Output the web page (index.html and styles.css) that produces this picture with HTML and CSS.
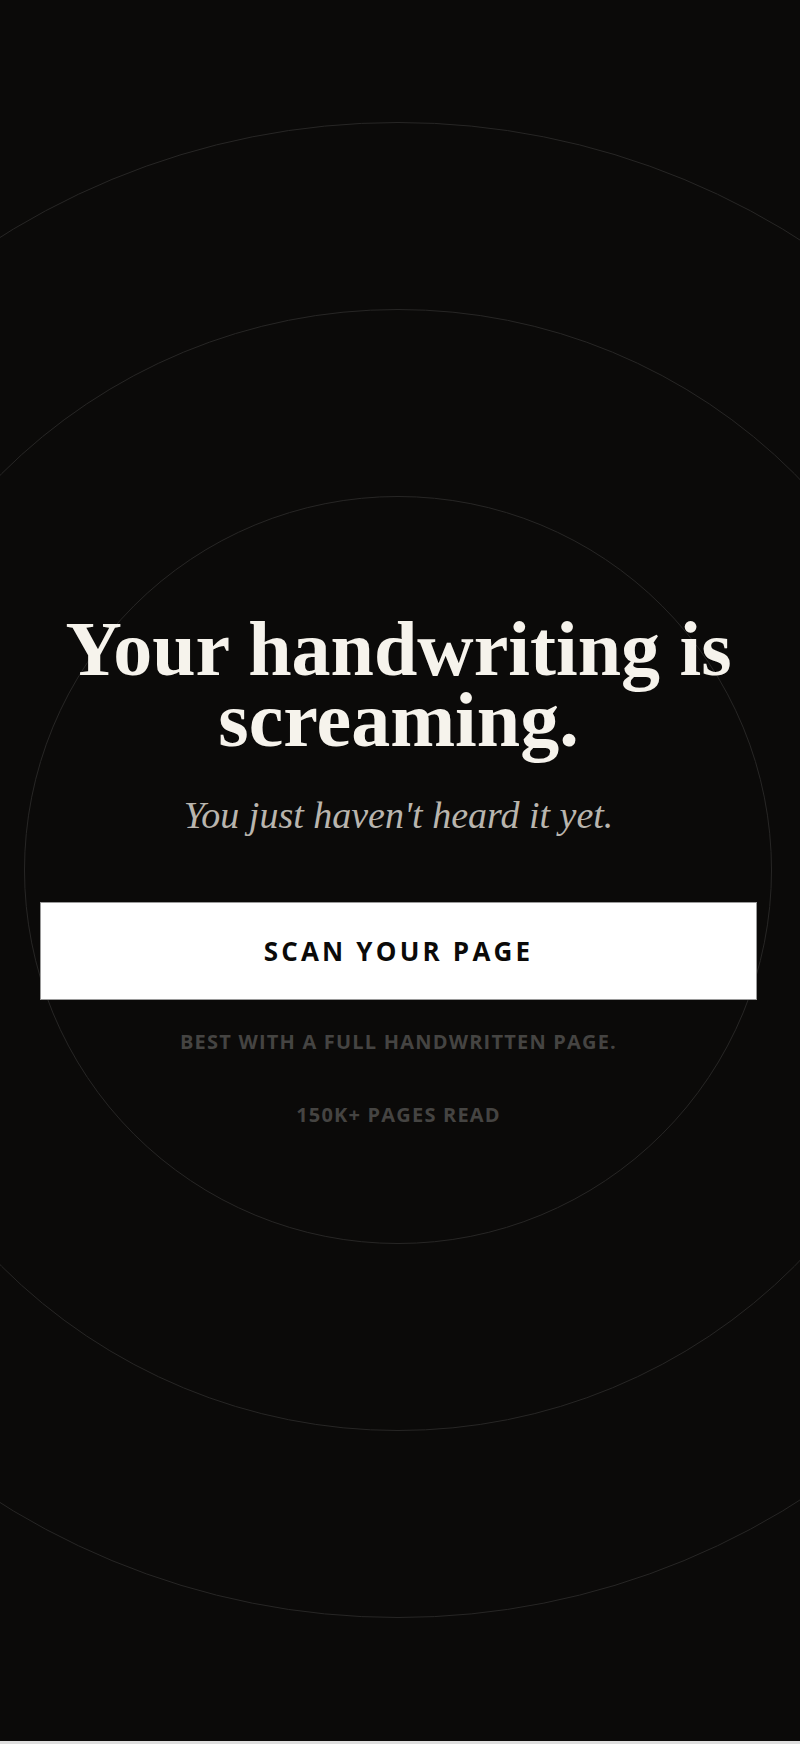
FILE: index.html
```html
<!DOCTYPE html>
<html lang="en">
<head>
<meta charset="utf-8">
<title>Your handwriting is screaming.</title>
<link rel="stylesheet" href="styles.css">
</head>
<body>
<main class="hero">
  <div class="rings" aria-hidden="true">
    <span class="ring ring-lg"></span>
    <span class="ring ring-md"></span>
    <span class="ring ring-sm"></span>
  </div>
  <div class="content">
    <h1 class="title">Your handwriting is screaming.</h1>
    <p class="subtitle">You just haven't heard it yet.</p>
    <button class="cta" type="button">SCAN YOUR PAGE</button>
    <p class="note">BEST WITH A FULL HANDWRITTEN PAGE.</p>
    <p class="stat">150K+ PAGES READ</p>
  </div>
</main>
<div class="next-section"></div>
</body>
</html>
```

FILE: styles.css
```css
html, body {
  margin: 0;
  padding: 0;
}

body {
  background: #dedede;
}

.hero {
  position: relative;
  height: 1741px;
  overflow: hidden;
  background: #0b0a09;
  display: flex;
  align-items: center;
  justify-content: center;
}

.rings {
  position: absolute;
  left: 398px;
  top: 870px;
  width: 0;
  height: 0;
}

.ring {
  position: absolute;
  border: 1px solid #272625;
  border-radius: 50%;
  box-sizing: border-box;
}

.ring-sm {
  width: 748px;
  height: 748px;
  left: -374px;
  top: -374px;
}

.ring-md {
  width: 1122px;
  height: 1122px;
  left: -561px;
  top: -561px;
}

.ring-lg {
  width: 1496px;
  height: 1496px;
  left: -748px;
  top: -748px;
}

.content {
  position: relative;
  width: 717px;
  margin-left: -3px;
  display: flex;
  flex-direction: column;
  align-items: center;
  text-align: center;
}

.title {
  margin: 0;
  font-family: "Liberation Serif", "Times New Roman", serif;
  font-weight: 700;
  font-size: 78px;
  line-height: 71px;
  letter-spacing: 0;
  color: #f6f3ec;
}

.subtitle {
  margin: 39px 0 0;
  font-family: "Liberation Serif", "Times New Roman", serif;
  font-style: italic;
  font-size: 38px;
  line-height: 43px;
  color: #b9b5ae;
}

.cta {
  margin-top: 65px;
  width: 100%;
  height: 98px;
  background: #ffffff;
  border: 1px solid #9a9a9a;
  border-radius: 0;
  font-family: "Open Sans", "Noto Sans", sans-serif;
  font-weight: 700;
  font-size: 26px;
  letter-spacing: 3.2px;
  color: #0b0a09;
  padding: 0;
  cursor: pointer;
}

.note,
.stat {
  margin: 0;
  font-family: "Open Sans", "Noto Sans", sans-serif;
  font-weight: 700;
  font-size: 20px;
  line-height: 26px;
  letter-spacing: 1.2px;
  color: #454442;
}

.note {
  margin-top: 29px;
}

.stat {
  margin-top: 47px;
}

.next-section {
  height: 3px;
  background: #dedede;
}
```
